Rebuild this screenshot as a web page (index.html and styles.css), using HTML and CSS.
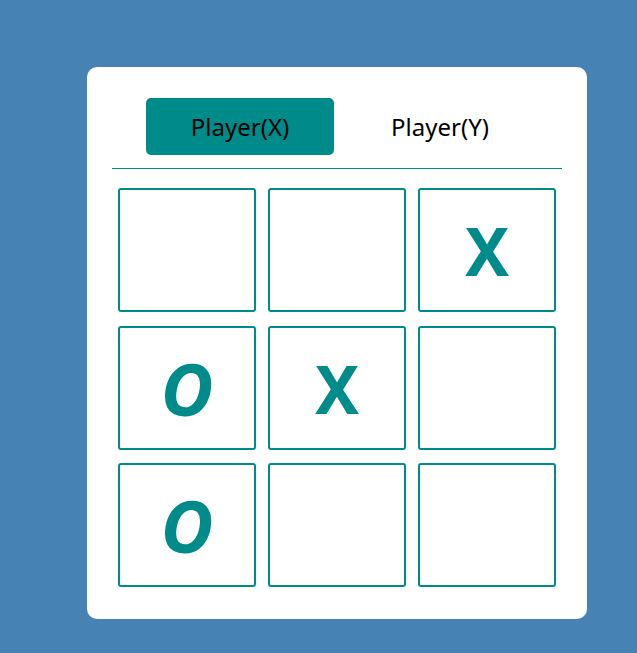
FILE: index.html
```html
<!DOCTYPE html>
<html lang="en">
<head>
  <meta charset="UTF-8">
  <meta name="viewport" content="width=device-width, initial-scale=1.0">
  <title>Tic Tac Toe</title>
  <link rel="stylesheet" href="styles.css">
</head>
<body>
  <div class="game">
    <!-- players -->
    <div class="players">
      <button class="player active">Player(X)</button>
      <button class="player">Player(Y)</button>
    </div>
    <div class="divider"></div>

    <!-- board -->
    <div class="board">
      <button class="cell"></button>
      <button class="cell"></button>
      <button class="cell x">X</button>

      <button class="cell o">O</button>
      <button class="cell x">X</button>
      <button class="cell"></button>

      <button class="cell o">O</button>
      <button class="cell"></button>
      <button class="cell"></button>
    </div>
  </div>
</body>
</html>
```

FILE: styles.css
```css
/* Stylesheet */
body {
  font-family: "Comic Sans MS", "Noto Sans", sans-serif;
  background-color: #4682b4;
  margin: 0;
  height: 653px;
}

.game {
  background-color: #ffffff;
  border-radius: 10px;
  width: 450px;
  margin: 67px 0 0 87px;
  padding: 31px 25px 32px;
}

.players {
  display: flex;
  gap: 12px;
  padding-left: 34px;
}

.player {
  width: 188px;
  height: 57px;
  border: none;
  border-radius: 5px;
  background: transparent;
  font-family: inherit;
  font-size: 24px;
  color: #000;
  cursor: pointer;
}

.player.active {
  background-color: #008b8b;
}

.divider {
  height: 1px;
  background-color: #008b8b;
  margin: 13px 0 19px;
}

.board {
  display: grid;
  grid-template-columns: repeat(3, 138px);
  grid-auto-rows: 124px;
  column-gap: 12px;
  row-gap: 13.5px;
  margin: 0 6px;
}

.cell {
  border: 2px solid #008b8b;
  border-radius: 3px;
  background-color: #fff;
  color: #008b8b;
  font-family: "Noto Sans", sans-serif;
  font-weight: bold;
  font-size: 66px;
  padding: 0;
  cursor: pointer;
}

.cell.o {
  font-style: italic;
  font-size: 72px;
}
```
